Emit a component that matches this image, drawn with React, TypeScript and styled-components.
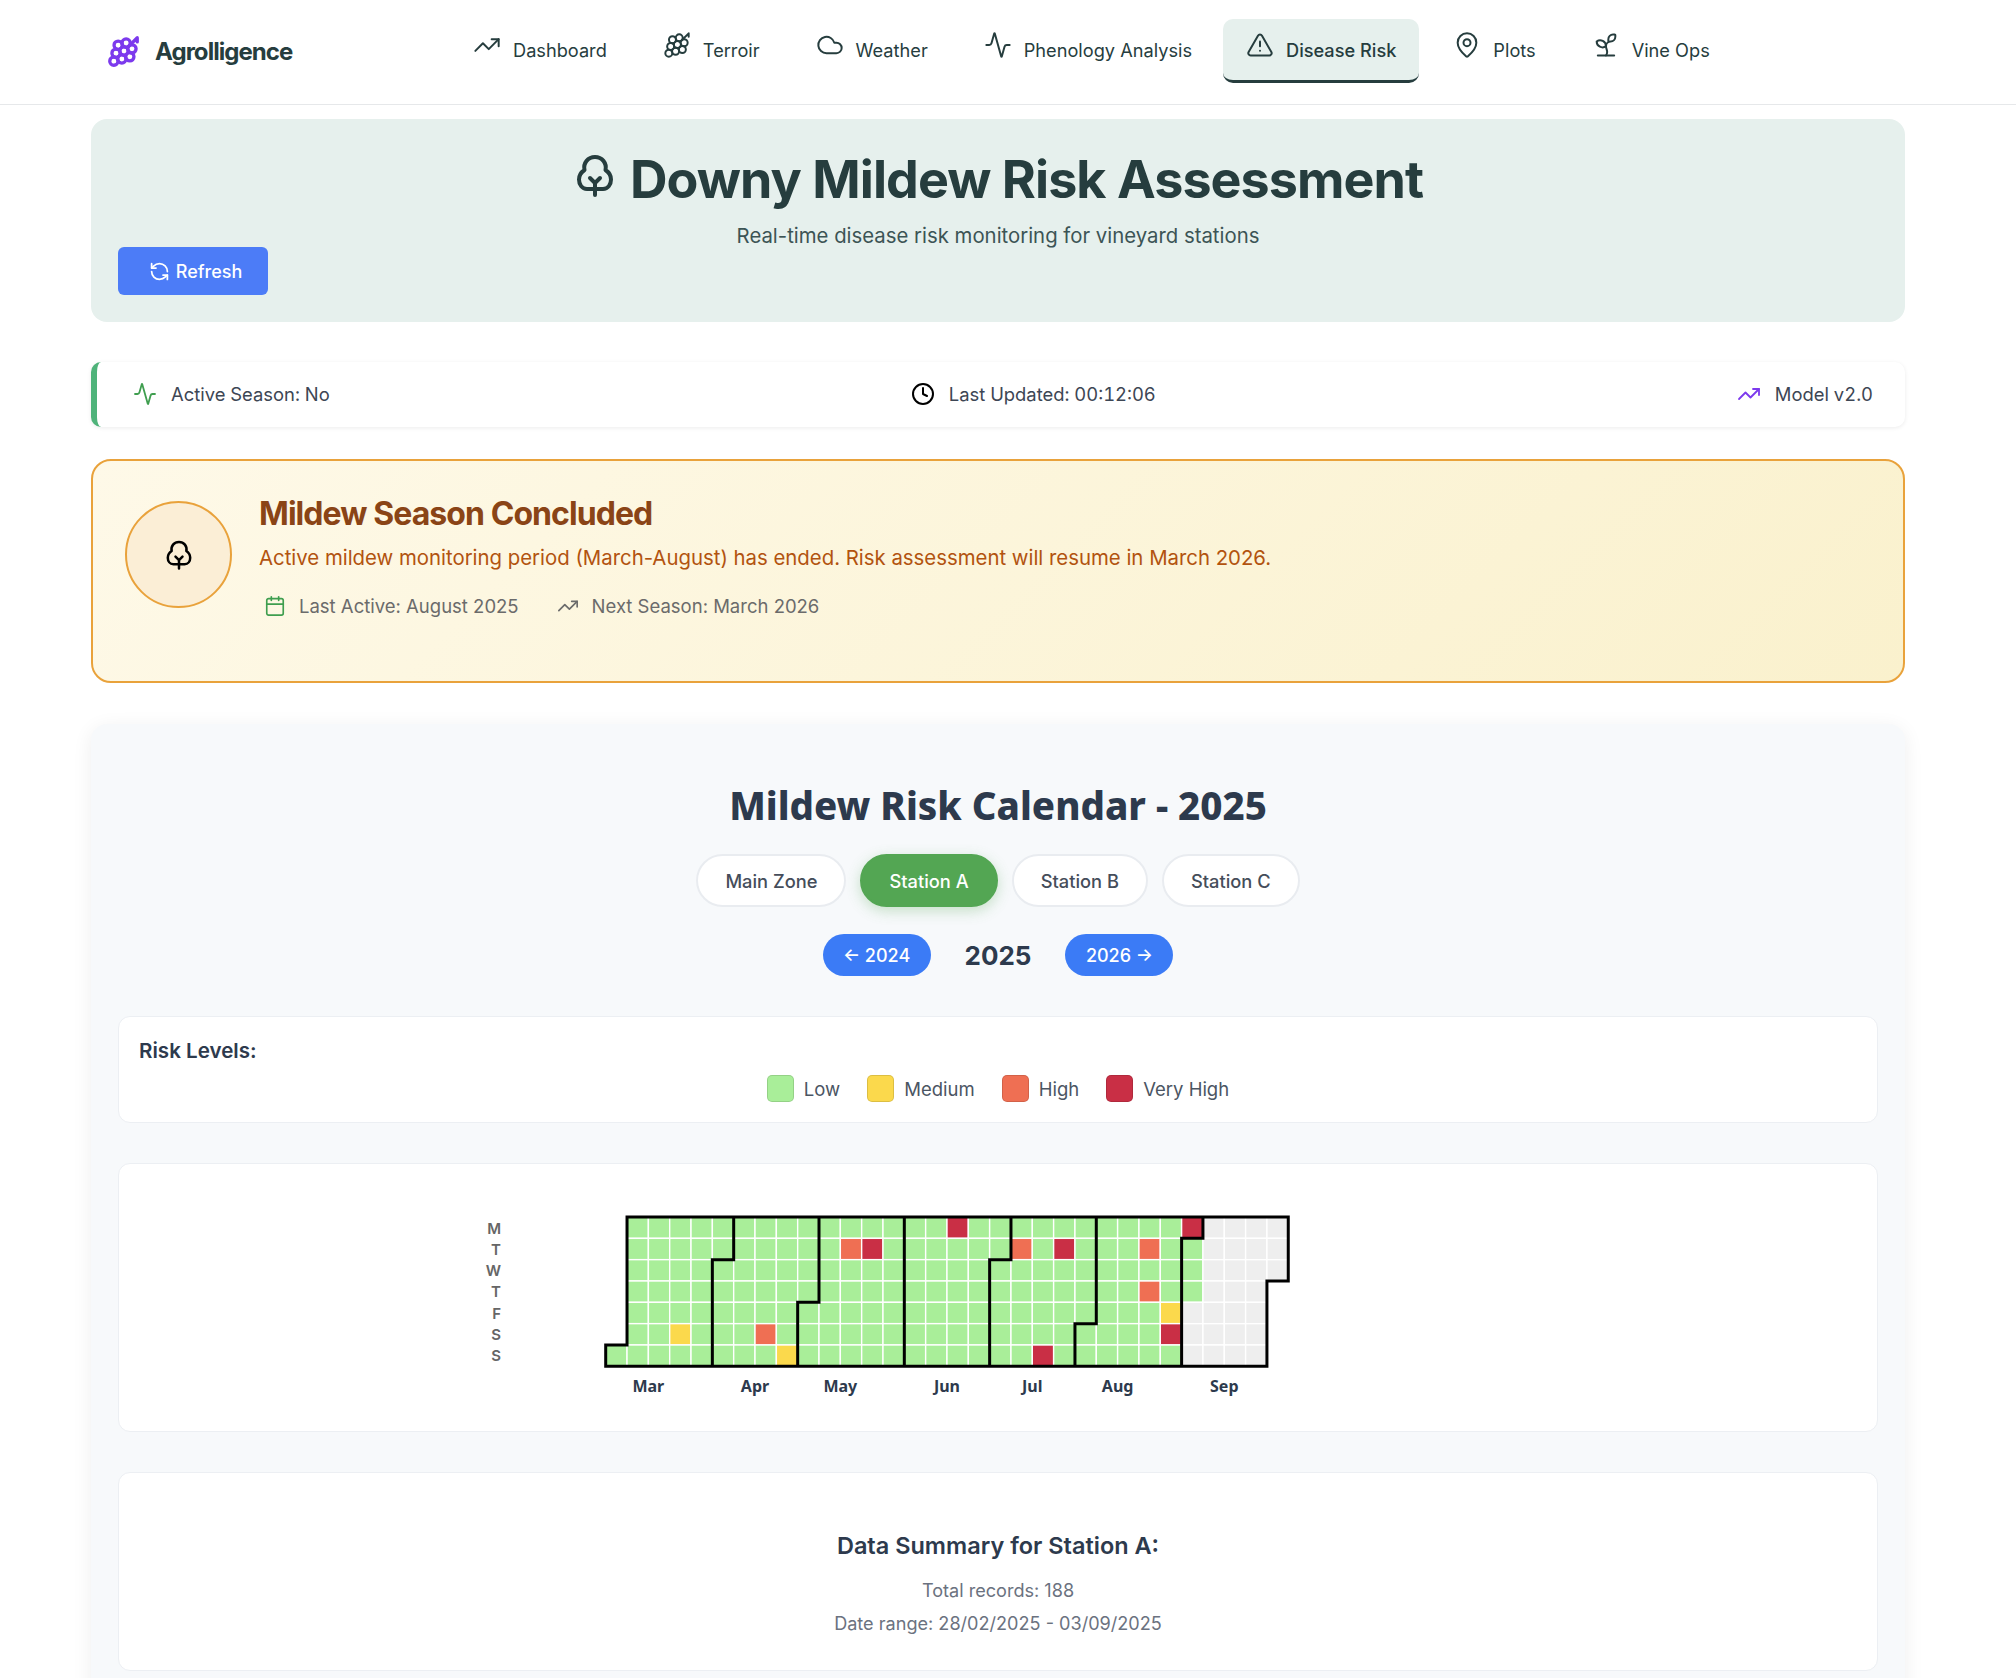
import React from "react";
import styled, { createGlobalStyle } from "styled-components";
import {
  Activity,
  Calendar,
  Clock,
  Cloud,
  Grape,
  MapPin,
  RefreshCcw,
  Sprout,
  TrendingUp,
  TriangleAlert,
} from "lucide-react";

// ==================== data ====================

const navItems = [
  { label: "Dashboard", icon: TrendingUp },
  { label: "Terroir", icon: Grape },
  { label: "Weather", icon: Cloud },
  { label: "Phenology Analysis", icon: Activity },
  { label: "Disease Risk", icon: TriangleAlert, active: true },
  { label: "Plots", icon: MapPin },
  { label: "Vine Ops", icon: Sprout },
];

const stations = ["Main Zone", "Station A", "Station B", "Station C"];

const legend = [
  { label: "Low", color: "#a9ee99" },
  { label: "Medium", color: "#fbd94c" },
  { label: "High", color: "#ef6f53" },
  { label: "Very High", color: "#c92f45" },
];

// first cell of each month as [column, row], weeks start on Monday
const monthStarts = [
  [0, 6],
  [5, 2],
  [9, 4],
  [14, 0],
  [18, 2],
  [22, 5],
  [27, 1],
];
const lastCell = 31 * 7 + 2;
const monthLabels = [
  { label: "Mar", col: 2 },
  { label: "Apr", col: 7 },
  { label: "May", col: 11 },
  { label: "Jun", col: 16 },
  { label: "Jul", col: 20 },
  { label: "Aug", col: 24 },
  { label: "Sep", col: 29 },
];
const riskCells: Record<string, string> = {
  "3,5": "#fbd94c",
  "7,5": "#ef6f53",
  "8,6": "#fbd94c",
  "11,1": "#ef6f53",
  "12,1": "#c92f45",
  "16,0": "#c92f45",
  "19,1": "#ef6f53",
  "20,6": "#c92f45",
  "21,1": "#c92f45",
  "25,1": "#ef6f53",
  "25,3": "#ef6f53",
  "26,4": "#fbd94c",
  "26,5": "#c92f45",
  "27,0": "#c92f45",
};

const PITCH = 21.33;
const ORIGIN_X = 125.7;
const ORIGIN_Y = 12;

const monthOf = (col: number, row: number): number => {
  const index = col * 7 + row;
  if (col < 0 || row < 0 || row > 6 || index > lastCell) return -1;
  let month = -1;
  monthStarts.forEach(([c, r], i) => {
    if (index >= c * 7 + r) month = i;
  });
  return month;
};

// ==================== styles ====================

const GlobalStyle = createGlobalStyle`
  html, body {
    margin: 0;
    background: #ffffff;
    font-family: Inter, "Liberation Sans", sans-serif;
    color: #263d3e;
  }
  * { box-sizing: border-box; }
`;

const Page = styled.div`
  width: 2016px;
  height: 1678px;
  overflow: hidden;
`;

const Header = styled.header`
  height: 105px;
  display: flex;
  align-items: center;
  padding: 0 0 2px 107px;
  border-bottom: 1px solid #e6e8ea;
`;

const Logo = styled.div`
  width: 343px;
  display: flex;
  align-items: center;
  gap: 15px;
  color: #7c3aed;
`;

const LogoText = styled.span`
  font-size: 24px;
  font-weight: 700;
  letter-spacing: -0.95px;
  color: #263d3e;
`;

const Nav = styled.nav`
  display: flex;
  gap: 10px;
`;

const NavItem = styled.a<{ $active?: boolean }>`
  height: 64px;
  display: flex;
  align-items: center;
  gap: 12px;
  padding: 0 23px;
  border-radius: 10px;
  font-size: 18.2px;
  font-weight: ${(p) => (p.$active ? 500 : 400)};
  color: #263d3e;
  background: ${(p) => (p.$active ? "#e6f0ed" : "transparent")};
  border-bottom: 3px solid ${(p) => (p.$active ? "#263d3e" : "transparent")};
  margin-left: ${(p) => (p.$active ? "-2px" : "0")};
  margin-right: ${(p) => (p.$active ? "1px" : "0")};
  svg {
    margin-bottom: 9px;
  }
`;

const Main = styled.main`
  padding: 14px 111px 0 91px;
`;

const Hero = styled.section`
  height: 203px;
  padding: 29px 27px 27px;
  background: #e6f0ed;
  border-radius: 16px;
`;

const HeroTitle = styled.h1`
  margin: 0;
  display: flex;
  justify-content: center;
  align-items: center;
  gap: 15px;
  padding-left: 2px;
  font-size: 52px;
  line-height: 64px;
  font-weight: 700;
  letter-spacing: -0.95px;
  color: #263d3e;
  svg {
    margin-bottom: 10px;
  }
`;

const HeroSubtitle = styled.p`
  margin: 10px 0 0;
  text-align: center;
  font-size: 20.35px;
  line-height: 28px;
  color: #3c5455;
`;

const RefreshButton = styled.button`
  width: 150px;
  height: 48px;
  margin-top: -3px;
  padding: 0 0 0 5px;
  display: flex;
  align-items: center;
  justify-content: center;
  gap: 6px;
  border: none;
  border-radius: 6px;
  background: #4c7cf7;
  color: #ffffff;
  font-family: inherit;
  font-size: 18px;
  font-weight: 500;
`;

const StatusBar = styled.section`
  height: 65px;
  margin-top: 40px;
  padding: 0 32px 2px 36px;
  display: flex;
  align-items: center;
  justify-content: space-between;
  background: #ffffff;
  border-left: 6px solid #4fb37a;
  border-radius: 10px;
  box-shadow: 0 1px 4px rgba(0, 0, 0, 0.08);
`;

const StatusItem = styled.div`
  display: flex;
  align-items: center;
  gap: 14px;
  font-size: 18.4px;
  font-variant-numeric: tabular-nums;
  color: #3d4654;
`;

const Banner = styled.section`
  height: 224px;
  margin-top: 32px;
  padding: 40px 32px;
  display: flex;
  gap: 27px;
  border: 2px solid #e9a23b;
  border-radius: 20px;
  background: linear-gradient(135deg, #fef9e8 0%, #faf1cd 100%);
`;

const BannerCircle = styled.div`
  width: 107px;
  height: 107px;
  flex-shrink: 0;
  display: flex;
  align-items: center;
  justify-content: center;
  border: 2px solid #e9a23b;
  border-radius: 50%;
  background: #fbeed6;
  color: #000000;
`;

const BannerBody = styled.div`
  display: flex;
  flex-direction: column;
`;

const BannerTitle = styled.h2`
  margin: -7px 0 0;
  font-size: 32px;
  line-height: 40px;
  font-weight: 700;
  letter-spacing: -0.93px;
  color: #8a4416;
`;

const BannerText = styled.p`
  margin: 10px 0 0;
  font-size: 20.37px;
  line-height: 28px;
  color: #b2530f;
`;

const BannerMeta = styled.div`
  margin: 20px 0 0 5px;
  display: flex;
  gap: 38px;
`;

const MetaItem = styled.span`
  display: flex;
  align-items: center;
  gap: 13px;
  font-size: 18.5px;
  line-height: 28px;
  color: #6b6b6b;
`;

const Panel = styled.section`
  margin-top: 41px;
  padding: 49px 27px 27px;
  min-height: 1000px;
  background: #f7f9fb;
  border-radius: 16px;
  box-shadow: 0 4px 20px rgba(0, 0, 0, 0.07);
`;

const PanelTitle = styled.h2`
  margin: 0;
  text-align: center;
  font-family: "Noto Sans", sans-serif;
  font-size: 38.4px;
  line-height: 64px;
  font-weight: 800;
  color: #2d3a4d;
`;

const StationTabs = styled.div`
  margin-top: 17px;
  display: flex;
  justify-content: center;
  gap: 14px;
`;

const StationTab = styled.button<{ $active?: boolean }>`
  height: 53px;
  padding: 0 27px;
  font-family: inherit;
  font-size: 18.3px;
  font-weight: 500;
  border-radius: 27px;
  border: 2px solid ${(p) => (p.$active ? "#53a653" : "#e9ecf0")};
  background: ${(p) => (p.$active ? "#53a653" : "#ffffff")};
  color: ${(p) => (p.$active ? "#ffffff" : "#454d5a")};
  box-shadow: ${(p) => (p.$active ? "0 4px 14px rgba(83, 166, 83, 0.3)" : "none")};
`;

const YearNav = styled.div`
  margin-top: 27px;
  display: flex;
  justify-content: center;
  align-items: center;
  gap: 34px;
`;

const YearButton = styled.button`
  width: 108px;
  height: 42px;
  border: none;
  border-radius: 21px;
  background: #3b7bf6;
  color: #ffffff;
  font-family: inherit;
  font-size: 18px;
  font-weight: 500;
`;

const YearLabel = styled.span`
  font-size: 26px;
  font-weight: 700;
  color: #2d3a4d;
`;

const Card = styled.div`
  background: #ffffff;
  border: 1px solid #eceff3;
  border-radius: 12px;
`;

const LegendCard = styled(Card)`
  height: 107px;
  margin-top: 40px;
  padding: 21px 20px 20px;
`;

const LegendTitle = styled.div`
  font-size: 20.6px;
  line-height: 26px;
  font-weight: 600;
  color: #2d3a4d;
`;

const LegendRow = styled.div`
  margin-top: 11px;
  display: flex;
  justify-content: center;
  gap: 27px;
`;

const LegendItem = styled.div`
  display: flex;
  align-items: center;
  gap: 10px;
  font-size: 18.5px;
  color: #4b5563;
`;

const Swatch = styled.span<{ $color: string }>`
  width: 27px;
  height: 27px;
  border-radius: 5px;
  border: 1px solid rgba(0, 0, 0, 0.12);
  background: ${(p) => p.$color};
`;

const ChartCard = styled(Card)`
  height: 269px;
  margin-top: 40px;
  padding: 41px 0 0 361px;
`;

const DayLabel = styled.text`
  font-family: Inter, sans-serif;
  font-size: 15px;
  font-weight: 600;
  fill: #666666;
  text-anchor: end;
  dominant-baseline: central;
`;

const MonthLabel = styled.text`
  font-family: "Noto Sans", sans-serif;
  font-size: 16px;
  font-weight: 700;
  fill: #2d3a4d;
  text-anchor: middle;
  dominant-baseline: central;
`;

const SummaryCard = styled(Card)`
  height: 199px;
  margin-top: 40px;
  padding-top: 57px;
  text-align: center;
`;

const SummaryTitle = styled.h3`
  margin: 0;
  font-size: 23.5px;
  line-height: 32px;
  font-weight: 600;
  color: #2d3a4d;
`;

const SummaryLine = styled.p`
  margin: 0;
  font-size: 18.1px;
  line-height: 33px;
  color: #6b7280;
`;

const SummaryLines = styled.div`
  margin-top: 12px;
`;

// ==================== components ====================

// egg shaped crown with a forked trunk, the lucide tree has a different outline
const TreeIcon: React.FC<{ width: number; height: number; stroke: number }> = ({ width, height, stroke }) => (
  <svg width={width} height={height} viewBox="5 7 40 44" fill="none" stroke="currentColor" strokeWidth={stroke} strokeLinecap="round" strokeLinejoin="round">
    <path d="M17 43C12 43 9 38.5 9 33.5C9 29 11.5 26 14.5 24C13 17 18 11 25 11C32 11 37 17 35.5 24C38.5 26 41 29 41 33.5C41 38.5 38 43 33 43Z" />
    <path d="M25 49V37M20 32L25 37L30 32" />
  </svg>
);

const RiskChart: React.FC = () => {
  const cells: React.ReactNode[] = [];
  const edges: string[] = [];

  for (let col = 0; col < 32; col++) {
    for (let row = 0; row < 7; row++) {
      const month = monthOf(col, row);
      if (month < 0) continue;
      const x = ORIGIN_X + col * PITCH;
      const y = ORIGIN_Y + row * PITCH;
      const isFuture = col * 7 + row >= 27 * 7 + 4;
      const fill = riskCells[`${col},${row}`] || (isFuture ? "#eeeeee" : "#a9ee99");
      cells.push(
        <rect key={`${col}-${row}`} x={x} y={y} width={PITCH} height={PITCH} fill={fill} stroke="#ffffff" strokeWidth={1.4} />
      );
      // month outline: draw an edge wherever the neighbour belongs to another month
      if (monthOf(col - 1, row) !== month) edges.push(`M${x} ${y}V${y + PITCH}`);
      if (monthOf(col + 1, row) !== month) edges.push(`M${x + PITCH} ${y}V${y + PITCH}`);
      if (monthOf(col, row - 1) !== month) edges.push(`M${x} ${y}H${x + PITCH}`);
      if (monthOf(col, row + 1) !== month) edges.push(`M${x} ${y + PITCH}H${x + PITCH}`);
    }
  }

  return (
    <svg width={830} height={200}>
      {["M", "T", "W", "T", "F", "S", "S"].map((d, i) => (
        <DayLabel key={i} x={21} y={ORIGIN_Y + i * PITCH + 11}>
          {d}
        </DayLabel>
      ))}
      {cells}
      <path d={edges.join("")} fill="none" stroke="#000000" strokeWidth={3} strokeLinecap="square" />
      {monthLabels.map((m) => (
        <MonthLabel key={m.label} x={ORIGIN_X + m.col * PITCH} y={181}>
          {m.label}
        </MonthLabel>
      ))}
    </svg>
  );
};

const App: React.FC = () => {
  return (
    <Page>
      <GlobalStyle />
      <Header>
        <Logo>
          <Grape size={33} strokeWidth={2.4} />
          <LogoText>Agrolligence</LogoText>
        </Logo>
        <Nav>
          {navItems.map(({ label, icon: Icon, active }) => (
            <NavItem key={label} $active={active}>
              <Icon size={28} strokeWidth={1.7} />
              {label}
            </NavItem>
          ))}
        </Nav>
      </Header>

      <Main>
        <Hero>
          <HeroTitle>
            <TreeIcon width={40} height={44} stroke={4} />
            Downy Mildew Risk Assessment
          </HeroTitle>
          <HeroSubtitle>Real-time disease risk monitoring for vineyard stations</HeroSubtitle>
          <RefreshButton>
            <RefreshCcw size={21} strokeWidth={2} />
            Refresh
          </RefreshButton>
        </Hero>

        <StatusBar>
          <StatusItem>
            <Activity size={24} color="#3f9e4f" strokeWidth={1.8} />
            Active Season: No
          </StatusItem>
          <StatusItem>
            <Clock size={24} color="#000000" strokeWidth={2} />
            Last Updated: 00:12:06
          </StatusItem>
          <StatusItem>
            <TrendingUp size={24} color="#7c3aed" strokeWidth={1.8} />
            Model v2.0
          </StatusItem>
        </StatusBar>

        <Banner>
          <BannerCircle>
            <TreeIcon width={28} height={31} stroke={3.6} />
          </BannerCircle>
          <BannerBody>
            <BannerTitle>Mildew Season Concluded</BannerTitle>
            <BannerText>
              Active mildew monitoring period (March-August) has ended. Risk assessment will resume in March 2026.
            </BannerText>
            <BannerMeta>
              <MetaItem>
                <Calendar size={22} color="#3f9e4f" strokeWidth={1.8} />
                Last Active: August 2025
              </MetaItem>
              <MetaItem>
                <TrendingUp size={22} color="#6b6b6b" strokeWidth={1.8} />
                Next Season: March 2026
              </MetaItem>
            </BannerMeta>
          </BannerBody>
        </Banner>

        <Panel>
          <PanelTitle>Mildew Risk Calendar - 2025</PanelTitle>
          <StationTabs>
            {stations.map((s) => (
              <StationTab key={s} $active={s === "Station A"}>
                {s}
              </StationTab>
            ))}
          </StationTabs>
          <YearNav>
            <YearButton>← 2024</YearButton>
            <YearLabel>2025</YearLabel>
            <YearButton>2026 →</YearButton>
          </YearNav>

          <LegendCard>
            <LegendTitle>Risk Levels:</LegendTitle>
            <LegendRow>
              {legend.map((l) => (
                <LegendItem key={l.label}>
                  <Swatch $color={l.color} />
                  {l.label}
                </LegendItem>
              ))}
            </LegendRow>
          </LegendCard>

          <ChartCard>
            <RiskChart />
          </ChartCard>

          <SummaryCard>
            <SummaryTitle>Data Summary for Station A:</SummaryTitle>
            <SummaryLines>
              <SummaryLine>Total records: 188</SummaryLine>
              <SummaryLine>Date range: 28/02/2025 - 03/09/2025</SummaryLine>
            </SummaryLines>
          </SummaryCard>
        </Panel>
      </Main>
    </Page>
  );
};

export default App;
